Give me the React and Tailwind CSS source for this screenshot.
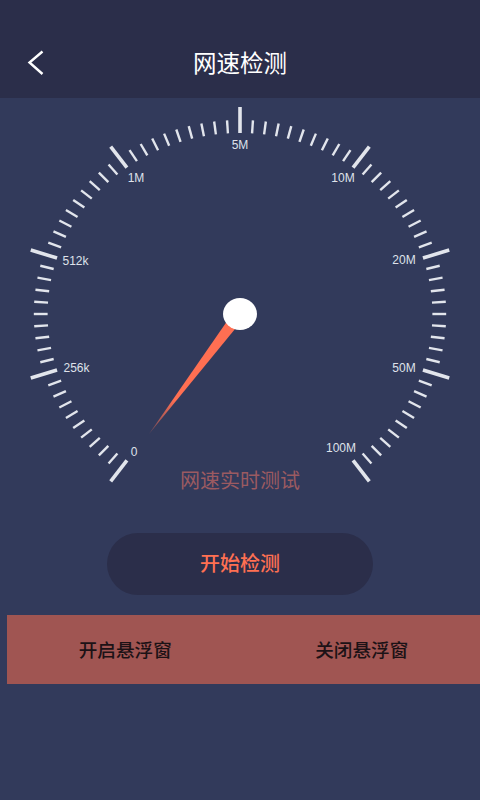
const ticks = Array.from({ length: 81 }, (_, i) => i);

const labels = [
  { text: "0", x: 134, y: 452 },
  { text: "256k", x: 76.5, y: 368 },
  { text: "512k", x: 75.5, y: 261 },
  { text: "1M", x: 136, y: 178 },
  { text: "5M", x: 240, y: 145 },
  { text: "10M", x: 343, y: 178 },
  { text: "20M", x: 404, y: 260 },
  { text: "50M", x: 404, y: 368 },
  { text: "100M", x: 341, y: 448 },
];

// the dial is a little wider than tall in the picture
function tickLine(i) {
  const major = i % 10 === 0;
  const angle = ((-144 + i * 3.6) * Math.PI) / 180;
  const outer = major ? 207 : 194;
  const inner = 181;
  const sx = 1.0628;
  return {
    major,
    x1: 240 + Math.sin(angle) * inner * sx,
    y1: 314 - Math.cos(angle) * inner,
    x2: 240 + Math.sin(angle) * outer * sx,
    y2: 314 - Math.cos(angle) * outer,
  };
}

function Gauge() {
  return (
    <svg width="480" height="400" viewBox="0 98 480 400" className="block">
      <defs>
        <linearGradient id="needle" x1="150" y1="433" x2="232" y2="322" gradientUnits="userSpaceOnUse">
          <stop offset="0" stopColor="#ff6f52" stopOpacity="0.3" />
          <stop offset="0.3" stopColor="#ff6f52" />
          <stop offset="1" stopColor="#ff6f52" />
        </linearGradient>
      </defs>
      {ticks.map((i) => {
        const t = tickLine(i);
        return (
          <line
            key={i}
            x1={t.x1}
            y1={t.y1}
            x2={t.x2}
            y2={t.y2}
            stroke="#e2e5ec"
            strokeWidth={t.major ? 3.6 : 2.4}
          />
        );
      })}
      {labels.map((l) => (
        <text
          key={l.text}
          x={l.x}
          y={l.y}
          textAnchor="middle"
          dominantBaseline="central"
          fill="#dfe2ea"
          className="text-[12px] font-['Liberation_Sans',sans-serif]"
        >
          {l.text}
        </text>
      ))}
      <polygon points="149,434 226.5,322 235,329" fill="url(#needle)" />
      <ellipse cx="240" cy="314" rx="17" ry="16" fill="#ffffff" />
    </svg>
  );
}

export default function App() {
  return (
    <div className="w-[480px] h-[800px] bg-[#323a5b] overflow-hidden font-['Noto_Sans_CJK_SC',sans-serif]">
      <div className="h-[98px] pt-7 bg-[#2b2e4a] grid grid-cols-[1fr_auto_1fr] items-center">
        <svg width="60" height="32" viewBox="0 0 60 32" className="block">
          <polyline
            points="42.5,4.5 29.5,15.5 42.5,27"
            fill="none"
            stroke="#ffffff"
            strokeWidth="2.4"
          />
        </svg>
        <h1 className="text-[23.5px] leading-8 pb-0.5 text-white">网速检测</h1>
        <div />
      </div>

      <div className="relative h-[400px]">
        <Gauge />
        <p className="absolute left-0 right-0 top-[368px] text-center text-[20px] leading-7 text-[#9c5a61]">
          网速实时测试
        </p>
      </div>

      <div className="flex justify-center mt-[35px]">
        <button className="w-[266px] h-[62px] pb-0.5 rounded-full bg-[#2b2e4a] text-[20px] font-medium text-[#ff7052]">
          开始检测
        </button>
      </div>

      <div className="ml-[7px] mt-5 h-[69px] pb-0.5 flex items-center bg-[#a05552] text-[18.6px] font-medium text-[#1c1216]">
        <div className="flex-1 text-center">开启悬浮窗</div>
        <div className="flex-1 text-center">关闭悬浮窗</div>
      </div>
    </div>
  );
}
